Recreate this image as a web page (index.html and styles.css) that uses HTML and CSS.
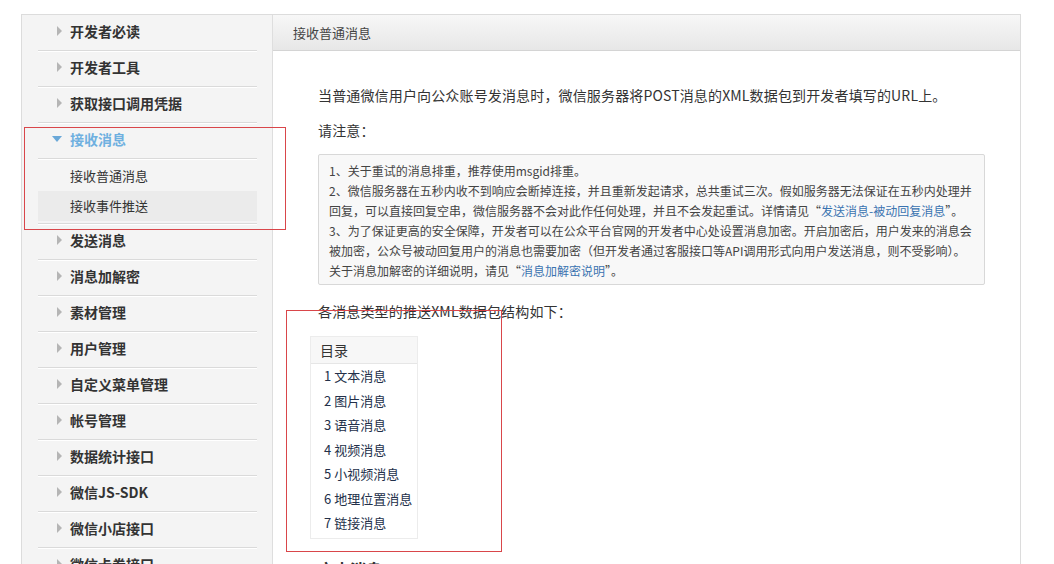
FILE: index.html
```html
<!DOCTYPE html>
<html lang="zh-CN">
<head>
    <meta charset="UTF-8">
    <title>接收普通消息</title>
    <link rel="stylesheet" href="styles.css">
</head>
<body>
    <div class="page">
        <div class="sidebar">
            <ul class="menu">
                <li class="item"><span class="arrow"></span>开发者必读</li>
                <li class="item"><span class="arrow"></span>开发者工具</li>
                <li class="item"><span class="arrow"></span>获取接口调用凭据</li>
                <li class="item active"><span class="arrow down"></span>接收消息</li>
                <li class="sub">
                    <div class="sub-item">接收普通消息</div>
                    <div class="sub-item current">接收事件推送</div>
                </li>
                <li class="item"><span class="arrow"></span>发送消息</li>
                <li class="item"><span class="arrow"></span>消息加解密</li>
                <li class="item"><span class="arrow"></span>素材管理</li>
                <li class="item"><span class="arrow"></span>用户管理</li>
                <li class="item"><span class="arrow"></span>自定义菜单管理</li>
                <li class="item"><span class="arrow"></span>帐号管理</li>
                <li class="item"><span class="arrow"></span>数据统计接口</li>
                <li class="item"><span class="arrow"></span>微信JS-SDK</li>
                <li class="item"><span class="arrow"></span>微信小店接口</li>
                <li class="item"><span class="arrow"></span>微信卡券接口</li>
            </ul>
        </div>

        <div class="main">
            <div class="main-header">接收普通消息</div>
            <div class="content">
                <p>当普通微信用户向公众账号发消息时，微信服务器将POST消息的XML数据包到开发者填写的URL上。</p>
                <p>请注意：</p>
                <div class="note">
                    1、关于重试的消息排重，推荐使用msgid排重。<br>
                    2、微信服务器在五秒内收不到响应会断掉连接，并且重新发起请求，总共重试三次。假如服务器无法保证在五秒内处理并<br>
                    回复，可以直接回复空串，微信服务器不会对此作任何处理，并且不会发起重试。详情请见“<a href="#">发送消息-被动回复消息</a>”。<br>
                    3、为了保证更高的安全保障，开发者可以在公众平台官网的开发者中心处设置消息加密。开启加密后，用户发来的消息会<br>
                    被加密，公众号被动回复用户的消息也需要加密（但开发者通过客服接口等API调用形式向用户发送消息，则不受影响）。<br>
                    关于消息加解密的详细说明，请见“<a href="#">消息加解密说明</a>”。
                </div>
                <p class="lead">各消息类型的推送XML数据包结构如下：</p>
                <div class="toc">
                    <div class="toc-title">目录</div>
                    <ul class="toc-list">
                        <li>1 文本消息</li>
                        <li>2 图片消息</li>
                        <li>3 语音消息</li>
                        <li>4 视频消息</li>
                        <li>5 小视频消息</li>
                        <li>6 地理位置消息</li>
                        <li>7 链接消息</li>
                    </ul>
                </div>
                <h3>文本消息</h3>
            </div>
        </div>
    </div>

    <!-- annotation boxes drawn over the screenshot -->
    <div class="mark mark-menu"></div>
    <div class="mark mark-toc"></div>
</body>
</html>
```

FILE: styles.css
```css
body {
    margin: 0;
    font-family: "Noto Sans CJK SC", "Noto Sans", sans-serif;
    color: #333;
    background: #fff;
    overflow: hidden;
}

ul {
    list-style: none;
    margin: 0;
    padding: 0;
}

.page {
    display: flex;
    width: 998px;
    margin: 14px 0 0 21px;
    border: 1px solid #dcdcdc;
    border-bottom: none;
    height: 600px;
}

/* sidebar */
.sidebar {
    width: 250px;
    flex-shrink: 0;
    background: #f4f4f4;
    border-right: 1px solid #dedede;
}

.menu {
    padding: 0 15px 0 16px;
}

.item {
    display: flex;
    align-items: center;
    box-sizing: border-box;
    height: 36px;
    padding: 0 0 3px 19px;
    font-size: 14px;
    font-weight: bold;
    color: #333;
    border-bottom: 1px solid #dadada;
    box-shadow: 0 1px 0 #fff;
}

.arrow {
    width: 0;
    height: 0;
    border-top: 5px solid transparent;
    border-bottom: 5px solid transparent;
    border-left: 5px solid #b5b5b5;
    margin-right: 8px;
}

.arrow.down {
    border-left: 5px solid transparent;
    border-right: 5px solid transparent;
    border-top: 6px solid #6aa8d8;
    border-bottom: none;
    margin-left: -5px;
    margin-right: 8px;
}

.item.active {
    color: #6fb0e0;
}

.sub {
    padding: 2px 0;
    border-bottom: 1px solid #dadada;
    box-shadow: 0 1px 0 #fff;
}

.sub-item {
    height: 30px;
    line-height: 30px;
    padding-left: 32px;
    font-size: 13px;
    color: #333;
}

.sub-item.current {
    background: #ebebeb;
}

/* main area */
.main {
    flex: 1;
    background: #fff;
}

.main-header {
    height: 35px;
    line-height: 35px;
    padding-left: 20px;
    font-size: 13px;
    color: #444;
    background: linear-gradient(#f7f7f7, #e7e7e7);
    border-bottom: 1px solid #d4d4d4;
}

.content {
    padding: 32px 0 0 45px;
}

.content p {
    margin: 0 0 11px;
    font-size: 14px;
    line-height: 24px;
    color: #333;
    letter-spacing: 0.15px;
}

.note {
    width: 645px;
    margin-top: 12px;
    padding: 6px 10px 3px;
    font-size: 12px;
    line-height: 20px;
    color: #444;
    background: #f8f8f8;
    border: 1px solid #d8d8d8;
    border-radius: 2px;
    white-space: nowrap;
}

.note a {
    color: #3a73b0;
    text-decoration: none;
}

.content p.lead {
    margin: 14px 0 13px;
}

.toc {
    width: 106px;
    margin-left: -8px;
    border: 1px solid #ececec;
    padding-bottom: 2px;
}

.toc-title {
    height: 26px;
    line-height: 26px;
    padding-left: 9px;
    font-size: 14px;
    color: #333;
    background: #f7f7f7;
    border-bottom: 1px solid #e6e6e6;
}

.toc-list li {
    height: 24.5px;
    line-height: 24.5px;
    padding-left: 13px;
    font-size: 13px;
    color: #23304a;
}

.content h3 {
    margin: 18px 0 0;
    font-size: 16px;
    color: #333;
}

/* red annotation frames */
.mark {
    position: absolute;
    border: 1px solid #d9464a;
}

.mark-menu {
    left: 24px;
    top: 127px;
    width: 260px;
    height: 101px;
}

.mark-toc {
    left: 286px;
    top: 310px;
    width: 214px;
    height: 240px;
}
```
